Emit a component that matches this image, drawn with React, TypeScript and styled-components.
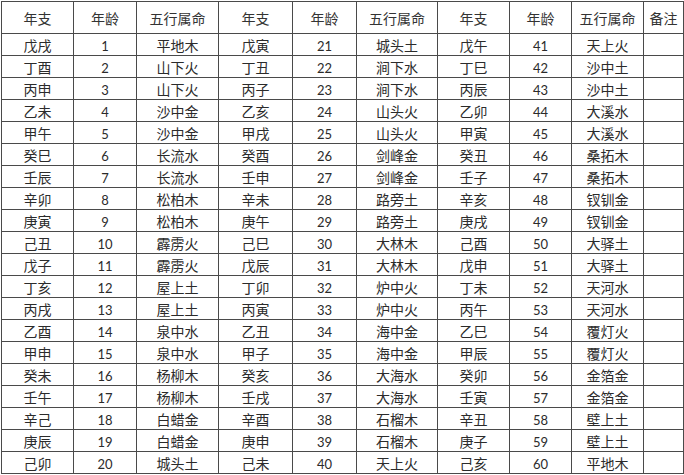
import React from 'react';
import styled, { createGlobalStyle } from 'styled-components';

const GlobalStyle = createGlobalStyle`
  html, body {
    margin: 0;
    padding: 0;
    background: #ffffff;
    overflow: hidden;
  }
  body {
    font-family: "Noto Sans CJK SC", "Liberation Sans", sans-serif;
    color: #2b2b2b;
  }
`;

// column widths taken from the grid lines of the sheet
const widths = [72, 63, 82, 74, 64, 81, 72, 62, 72, 40];

const headers = ['年支', '年龄', '五行属命', '年支', '年龄', '五行属命', '年支', '年龄', '五行属命', '备注'];

const branches = [
  ['戊戌', '戊寅', '戊午'],
  ['丁酉', '丁丑', '丁巳'],
  ['丙申', '丙子', '丙辰'],
  ['乙未', '乙亥', '乙卯'],
  ['甲午', '甲戌', '甲寅'],
  ['癸巳', '癸酉', '癸丑'],
  ['壬辰', '壬申', '壬子'],
  ['辛卯', '辛未', '辛亥'],
  ['庚寅', '庚午', '庚戌'],
  ['己丑', '己巳', '己酉'],
  ['戊子', '戊辰', '戊申'],
  ['丁亥', '丁卯', '丁未'],
  ['丙戌', '丙寅', '丙午'],
  ['乙酉', '乙丑', '乙巳'],
  ['甲申', '甲子', '甲辰'],
  ['癸未', '癸亥', '癸卯'],
  ['壬午', '壬戌', '壬寅'],
  ['辛己', '辛酉', '辛丑'],
  ['庚辰', '庚申', '庚子'],
  ['己卯', '己未', '己亥'],
];

const elements = [
  ['平地木', '城头土', '天上火'],
  ['山下火', '涧下水', '沙中土'],
  ['山下火', '涧下水', '沙中土'],
  ['沙中金', '山头火', '大溪水'],
  ['沙中金', '山头火', '大溪水'],
  ['长流水', '剑峰金', '桑拓木'],
  ['长流水', '剑峰金', '桑拓木'],
  ['松柏木', '路旁土', '钗钏金'],
  ['松柏木', '路旁土', '钗钏金'],
  ['霹雳火', '大林木', '大驿土'],
  ['霹雳火', '大林木', '大驿土'],
  ['屋上土', '炉中火', '天河水'],
  ['屋上土', '炉中火', '天河水'],
  ['泉中水', '海中金', '覆灯火'],
  ['泉中水', '海中金', '覆灯火'],
  ['杨柳木', '大海水', '金箔金'],
  ['杨柳木', '大海水', '金箔金'],
  ['白蜡金', '石榴木', '壁上土'],
  ['白蜡金', '石榴木', '壁上土'],
  ['城头土', '天上火', '平地木'],
];

const Sheet = styled.table`
  border-collapse: collapse;
  table-layout: fixed;
  width: 683px;
  margin: 1px 0 0 1px;
`;

const HeadRow = styled.tr`
  height: 32px;
`;

const Row = styled.tr`
  height: 22px;
`;

const HeadCell = styled.th`
  height: 32px;
  box-sizing: border-box;
  padding: 0;
  border: 1px solid #4a4a4a;
  font-weight: 400;
  font-size: 14px;
  line-height: 16px;
  text-align: center;
  vertical-align: middle;
  color: #333333;
`;

const Cell = styled.td<{ $num?: boolean }>`
  height: 22px;
  box-sizing: border-box;
  padding: ${(p) => (p.$num ? '3px 0 0' : '1px 0 0')};
  border: 1px solid #4a4a4a;
  text-align: center;
  vertical-align: middle;
  line-height: 16px;
  font-family: ${(p) =>
    p.$num ? '"Lato", "Liberation Sans", sans-serif' : '"Noto Sans CJK SC", sans-serif'};
  font-size: ${(p) => (p.$num ? '13px' : '14px')};
  color: #2b2b2b;
`;

export default function App() {
  return (
    <>
      <GlobalStyle />
      <Sheet>
        <colgroup>
          {widths.map((w, i) => (
            <col key={i} style={{ width: w }} />
          ))}
        </colgroup>
        <thead>
          <HeadRow>
            {headers.map((h, i) => (
              <HeadCell key={i}>{h}</HeadCell>
            ))}
          </HeadRow>
        </thead>
        <tbody>
          {branches.map((b, r) => (
            <Row key={r}>
              {[0, 1, 2].map((g) => (
                <React.Fragment key={g}>
                  <Cell>{b[g]}</Cell>
                  <Cell $num>{r + 1 + g * 20}</Cell>
                  <Cell>{elements[r][g]}</Cell>
                </React.Fragment>
              ))}
              <Cell />
            </Row>
          ))}
        </tbody>
      </Sheet>
    </>
  );
}
